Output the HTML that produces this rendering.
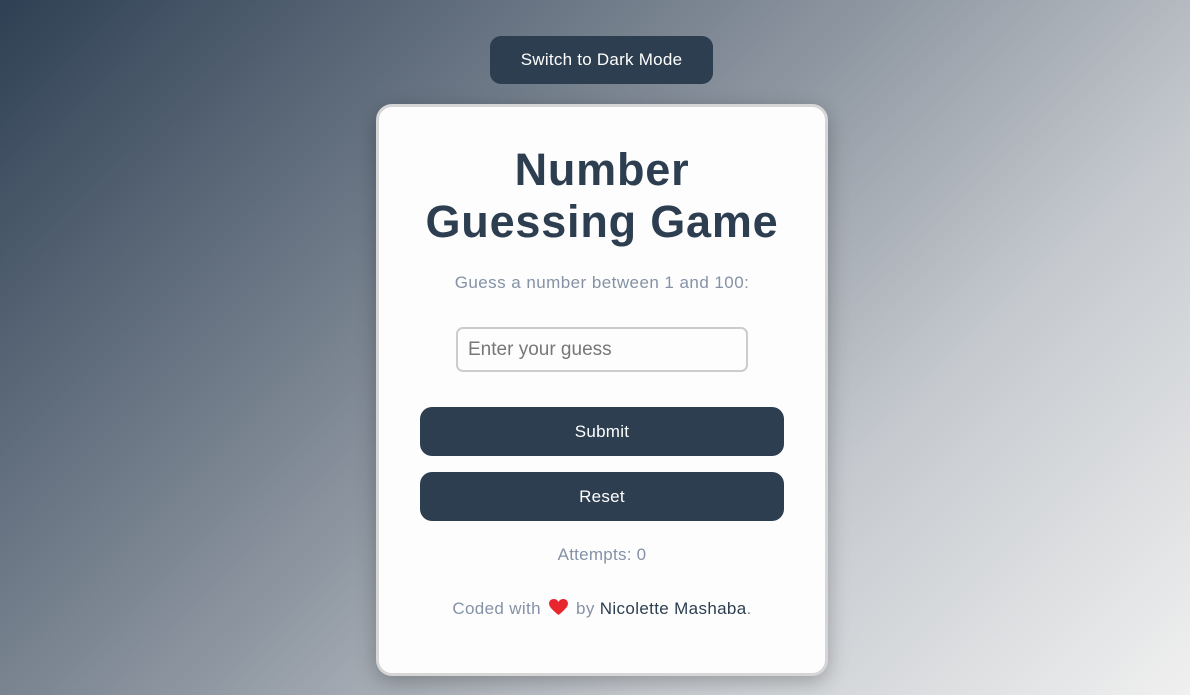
<!DOCTYPE html>
<html><head><meta charset="utf-8"><style>
*{box-sizing:border-box;margin:0;padding:0}
html,body{width:1190px;height:695px;overflow:hidden}
body{font-family:"Liberation Sans",Arial,sans-serif;background:linear-gradient(135deg,#2f4054 0%,#8a939e 45%,#c5c9ce 70%,#f0f0f0 100%);position:relative;letter-spacing:.25px}
.top{position:absolute;left:490px;top:36px;width:223px;height:48px;background:#2c3e50;color:#fff;border-radius:11px;font-size:17px;display:flex;align-items:center;justify-content:center}
.card{position:absolute;left:376px;top:104px;width:452px;height:572px;background:#fdfdfd;border:3px solid #d6d6d6;border-radius:16px;box-shadow:0 6px 20px rgba(0,0,0,.25)}
h1{position:absolute;left:0;right:0;top:37px;text-align:center;font-size:45px;line-height:52px;font-weight:bold;letter-spacing:.8px;color:#2c3e50}
.sub{position:absolute;left:0;right:0;top:166px;text-align:center;font-size:17px;color:#8592a6;letter-spacing:.45px}
.inp{position:absolute;left:77px;top:220px;width:292px;height:45px;border:2px solid #ccc;border-radius:7px;font-size:19px;color:#777;padding:10px 10px;letter-spacing:0}
.btn{position:absolute;left:41px;width:364px;height:49px;background:#2c3e50;border-radius:12px;color:#fff;font-size:17px;display:flex;align-items:center;justify-content:center}
.att{position:absolute;left:0;right:0;top:438px;text-align:center;font-size:17px;color:#8592a6}
.ft{position:absolute;left:0;right:0;top:492px;text-align:center;font-size:17px;color:#8592a6;letter-spacing:.35px}
.ft b{font-weight:normal;color:#2c3e50}
</style></head><body>
<div class="top">Switch to Dark Mode</div>
<div class="card">
<h1>Number<br>Guessing Game</h1>
<div class="sub">Guess a number between 1 and 100:</div>
<div class="inp">Enter your guess</div>
<div class="btn" style="top:300px">Submit</div>
<div class="btn" style="top:365px">Reset</div>
<div class="att">Attempts: 0</div>
<div class="ft">Coded with <svg width="19" height="17" viewBox="0 0 20 18" style="vertical-align:-2px;margin:0 3px"><path d="M10 17 C3 11 0 8 0 5 C0 2 2 0 5 0 C7 0 9 1 10 3 C11 1 13 0 15 0 C18 0 20 2 20 5 C20 8 17 11 10 17Z" fill="#e8262e"/></svg> by <b>Nicolette Mashaba</b>.</div>
</div>
</body></html>
